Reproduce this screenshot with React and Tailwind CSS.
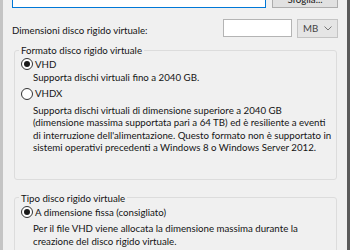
import React from 'react';

const font = { fontFamily: 'Lato, "Noto Sans", sans-serif' };

const Radio = ({ checked }) => (
  <span className="w-[12px] h-[12px] rounded-full border border-[#333] bg-white flex items-center justify-center shrink-0">
    {checked && <span className="w-[6px] h-[6px] rounded-full bg-[#1a1a1a]"></span>}
  </span>
);

const Line = ({ children }) => (
  <div className="whitespace-nowrap leading-[12.6px] h-[12.6px]">{children}</div>
);

const App = () => {
  return (
    <div className="w-[350px] h-[250px] overflow-hidden bg-[#f0f0f0] flex text-[9.7px] text-[#141414]" style={font}>
      <div className="w-[3px] shrink-0 bg-[#c4c4c4]"></div>
      <div className="flex-1 min-w-0 pl-[9px] pr-[9px]">
        {/* riga percorso */}
        <div className="flex gap-[6px] mt-[-13px]">
          <div className="w-[254px] h-[21px] bg-white border border-[#0078d7]"></div>
          <button className="w-[66px] h-[21px] bg-[#e1e1e1] border border-[#adadad] flex items-center justify-center pt-[3px]">
            Sfoglia...
          </button>
        </div>

        {/* dimensioni */}
        <div className="flex mt-[11px]">
          <div className="mt-[4px] whitespace-nowrap">Dimensioni disco rigido virtuale:</div>
          <div className="ml-auto flex gap-[5px]">
            <div className="w-[69px] h-[18px] bg-white border border-[#b4b4b4]"></div>
            <div className="w-[41px] h-[19px] bg-[#e5e5e5] border border-[#c4c4c4] flex items-center pl-[5px] pr-[5px] text-[#444]">
              <span>MB</span>
              <svg className="ml-auto" width="8" height="5" viewBox="0 0 8 5">
                <path d="M0.5 0.5 L4 4 L7.5 0.5" fill="none" stroke="#777" strokeWidth="1" />
              </svg>
            </div>
          </div>
        </div>

        {/* formato */}
        <fieldset className="min-w-0 mt-[5px] ml-[2px] mr-[1px] border border-[#dcdcdc] rounded-[3px] pl-[4px] pb-[25px]">
          <legend className="px-[2px] leading-[14px]">Formato disco rigido virtuale</legend>
          <div className="h-[14px] flex items-center gap-[2px] ml-[2px]">
            <Radio checked />
            <span>VHD</span>
          </div>
          <div className="ml-[14px]">
            <Line>Supporta dischi virtuali fino a 2040 GB.</Line>
          </div>
          <div className="h-[14px] flex items-center gap-[2px] ml-[2px] mt-[3px]">
            <Radio />
            <span>VHDX</span>
          </div>
          <div className="ml-[14px] mt-[3px]">
            <Line>Supporta dischi virtuali di dimensione superiore a 2040 GB</Line>
            <Line>(dimensione massima supportata pari a 64 TB) ed è resiliente a eventi</Line>
            <Line>di interruzione dell'alimentazione. Questo formato non è supportato in</Line>
            <Line>sistemi operativi precedenti a Windows 8 o Windows Server 2012.</Line>
          </div>
        </fieldset>

        {/* tipo */}
        <fieldset className="min-w-0 mt-[11px] ml-[2px] mr-[1px] border border-[#dcdcdc] rounded-[3px] pl-[4px] pb-[25px]">
          <legend className="px-[2px] leading-[14px]">Tipo disco rigido virtuale</legend>
          <div className="h-[14px] flex items-center gap-[2px] ml-[2px]">
            <Radio checked />
            <span>A dimensione fissa (consigliato)</span>
          </div>
          <div className="ml-[14px] mt-[3px]">
            <Line>Per il file VHD viene allocata la dimensione massima durante la</Line>
            <Line>creazione del disco rigido virtuale.</Line>
          </div>
        </fieldset>
      </div>
      <div className="w-[3px] shrink-0 bg-[#5a5a5a]"></div>
    </div>
  );
};

export default App;
